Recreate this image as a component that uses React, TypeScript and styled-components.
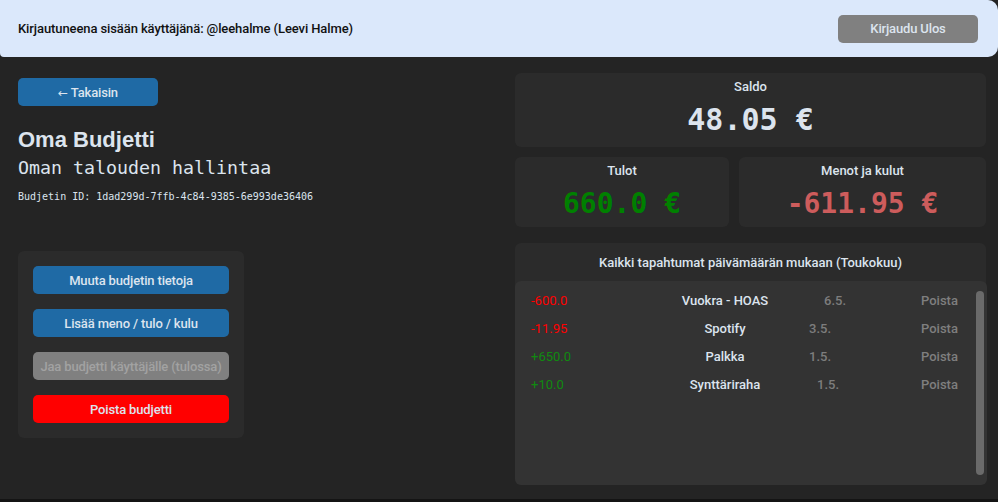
import React from "react";
import styled, { createGlobalStyle } from "styled-components";

const Global = createGlobalStyle`
  html, body { margin: 0; padding: 0; background: #242424; }
  body { width: 998px; height: 502px; overflow: hidden; font-family: Roboto, "Noto Sans", sans-serif; }
  #root { height: 502px; }
`;

const Page = styled.div`
  height: 502px;
  display: flex;
  flex-direction: column;
  background: #242424;
  color: #dce4ee;
`;

const Header = styled.header`
  height: 57px;
  flex: none;
  box-sizing: border-box;
  display: flex;
  align-items: center;
  justify-content: space-between;
  padding: 0 20px 0 18px;
  background: #dbe8fb;
  border-radius: 0 10px 10px 4px;
`;

const UserText = styled.span`
  font-size: 13px;
  font-weight: 500;
  letter-spacing: -0.1px;
  color: #111;
`;

const Button = styled.button<{ $variant?: "blue" | "gray" | "red" | "disabled"; $w?: number }>`
  width: ${(p) => p.$w ?? 196}px;
  height: 28px;
  border: none;
  border-radius: 5px;
  font-family: Roboto, sans-serif;
  font-size: 13px;
  font-weight: 500;
  letter-spacing: -0.15px;
  padding: 0;
  white-space: nowrap;
  cursor: pointer;
  background: ${(p) =>
    p.$variant === "gray" || p.$variant === "disabled"
      ? "#808080"
      : p.$variant === "red"
      ? "#ff0000"
      : "#1f6aa5"};
  color: ${(p) => (p.$variant === "disabled" ? "#a2a2a2" : "#dce4ee")};
`;

const Arrow = styled.span`
  font-family: "DejaVu Sans", sans-serif;
  font-weight: 400;
  font-size: 12px;
`;

const Main = styled.div`
  flex: 1;
  display: flex;
  min-height: 0;
`;

const Left = styled.section`
  width: 515px;
  box-sizing: border-box;
  padding: 21px 0 0 18px;
  display: flex;
  flex-direction: column;
  align-items: flex-start;
`;

const Title = styled.h1`
  margin: 21px 0 0;
  font-family: "Liberation Sans", Arial, sans-serif;
  font-size: 22px;
  font-weight: 700;
  line-height: 26px;
`;

const Subtitle = styled.div`
  margin-top: 3px;
  font-family: "DejaVu Sans Mono", monospace;
  font-size: 18.3px;
  line-height: 24px;
`;

const IdText = styled.div`
  margin-top: 10px;
  font-family: "DejaVu Sans Mono", monospace;
  font-size: 10px;
  line-height: 14px;
`;

const ActionPanel = styled.div`
  margin-top: 47px;
  width: 226px;
  box-sizing: border-box;
  padding: 15px;
  background: #2b2b2b;
  border-radius: 6px;
  display: flex;
  flex-direction: column;
  gap: 15px;
`;

const Right = styled.section`
  width: 471px;
  padding-top: 16px;
  display: flex;
  flex-direction: column;
`;

const Card = styled.div<{ $h: number }>`
  height: ${(p) => p.$h}px;
  box-sizing: border-box;
  background: #2b2b2b;
  border-radius: 6px;
  display: flex;
  flex-direction: column;
  align-items: center;
  padding-top: 6px;
`;

const CardLabel = styled.div`
  font-size: 13px;
  font-weight: 500;
  line-height: 16px;
`;

const Amount = styled.div<{ $color: string; $size: number }>`
  font-family: "DejaVu Sans Mono", monospace;
  font-weight: 700;
  font-size: ${(p) => p.$size}px;
  line-height: 36px;
  margin-top: 7px;
  color: ${(p) => p.$color};
`;

const CardRow = styled.div`
  display: grid;
  grid-template-columns: 214px 1fr;
  gap: 10px;
  margin-top: 10px;
`;

const TxPanel = styled.div`
  margin-top: 16px;
  height: 242px;
  background: #2b2b2b;
  border-radius: 6px;
  display: flex;
  flex-direction: column;
`;

const TxTitle = styled.div`
  height: 38px;
  display: flex;
  align-items: center;
  justify-content: center;
  font-size: 13px;
  font-weight: 500;
`;

const TxList = styled.div`
  flex: 1;
  position: relative;
  background: #333333;
  border-radius: 6px;
  padding-top: 5px;
  margin-right: -1px;
`;

const TxRow = styled.div`
  height: 28px;
  display: grid;
  grid-template-columns: 150px 120px 1fr 66px;
  align-items: center;
  font-size: 13px;
`;

const TxAmount = styled.span<{ $pos: boolean }>`
  padding-left: 16px;
  color: ${(p) => (p.$pos ? "#108a10" : "#ff0000")};
`;

const TxName = styled.span`
  text-align: center;
  font-weight: 500;
  color: #dce4ee;
`;

const TxDate = styled.span<{ $shift: number }>`
  padding-left: ${(p) => p.$shift}px;
  color: #7d7d7d;
  font-weight: 500;
`;

const TxDelete = styled.span`
  color: #7f7f7f;
  font-weight: 500;
`;

const Scrollbar = styled.div`
  position: absolute;
  right: 3px;
  top: 10px;
  bottom: 10px;
  width: 8px;
  border-radius: 4px;
  background: #6a6a6a;
`;

const BottomStrip = styled.div`
  height: 3px;
  flex: none;
  background: #141414;
`;

const txs = [
  { amount: "-600.0", pos: false, name: "Vuokra - HOAS", date: "6.5.", shift: 39 },
  { amount: "-11.95", pos: false, name: "Spotify", date: "3.5.", shift: 24 },
  { amount: "+650.0", pos: true, name: "Palkka", date: "1.5.", shift: 24 },
  { amount: "+10.0", pos: true, name: "Synttäriraha", date: "1.5.", shift: 32 },
];

export default function App() {
  return (
    <>
      <Global />
      <Page>
        <Header>
          <UserText>Kirjautuneena sisään käyttäjänä: @leehalme (Leevi Halme)</UserText>
          <Button $variant="gray" $w={140}>Kirjaudu Ulos</Button>
        </Header>
        <Main>
          <Left>
            <Button $w={140}>
              <Arrow>←</Arrow> Takaisin
            </Button>
            <Title>Oma Budjetti</Title>
            <Subtitle>Oman talouden hallintaa</Subtitle>
            <IdText>Budjetin ID: 1dad299d-7ffb-4c84-9385-6e993de36406</IdText>
            <ActionPanel>
              <Button>Muuta budjetin tietoja</Button>
              <Button>Lisää meno / tulo / kulu</Button>
              <Button $variant="disabled">Jaa budjetti käyttäjälle (tulossa)</Button>
              <Button $variant="red">Poista budjetti</Button>
            </ActionPanel>
          </Left>
          <Right>
            <Card $h={74}>
              <CardLabel>Saldo</CardLabel>
              <Amount $color="#dce4ee" $size={30}>48.05 €</Amount>
            </Card>
            <CardRow>
              <Card $h={70}>
                <CardLabel>Tulot</CardLabel>
                <Amount $color="#008000" $size={28}>660.0 €</Amount>
              </Card>
              <Card $h={70}>
                <CardLabel>Menot ja kulut</CardLabel>
                <Amount $color="#cd5c5c" $size={28}>-611.95 €</Amount>
              </Card>
            </CardRow>
            <TxPanel>
              <TxTitle>Kaikki tapahtumat päivämäärän mukaan (Toukokuu)</TxTitle>
              <TxList>
                {txs.map((t) => (
                  <TxRow key={t.name}>
                    <TxAmount $pos={t.pos}>{t.amount}</TxAmount>
                    <TxName>{t.name}</TxName>
                    <TxDate $shift={t.shift}>{t.date}</TxDate>
                    <TxDelete>Poista</TxDelete>
                  </TxRow>
                ))}
                <Scrollbar />
              </TxList>
            </TxPanel>
          </Right>
        </Main>
        <BottomStrip />
      </Page>
    </>
  );
}
